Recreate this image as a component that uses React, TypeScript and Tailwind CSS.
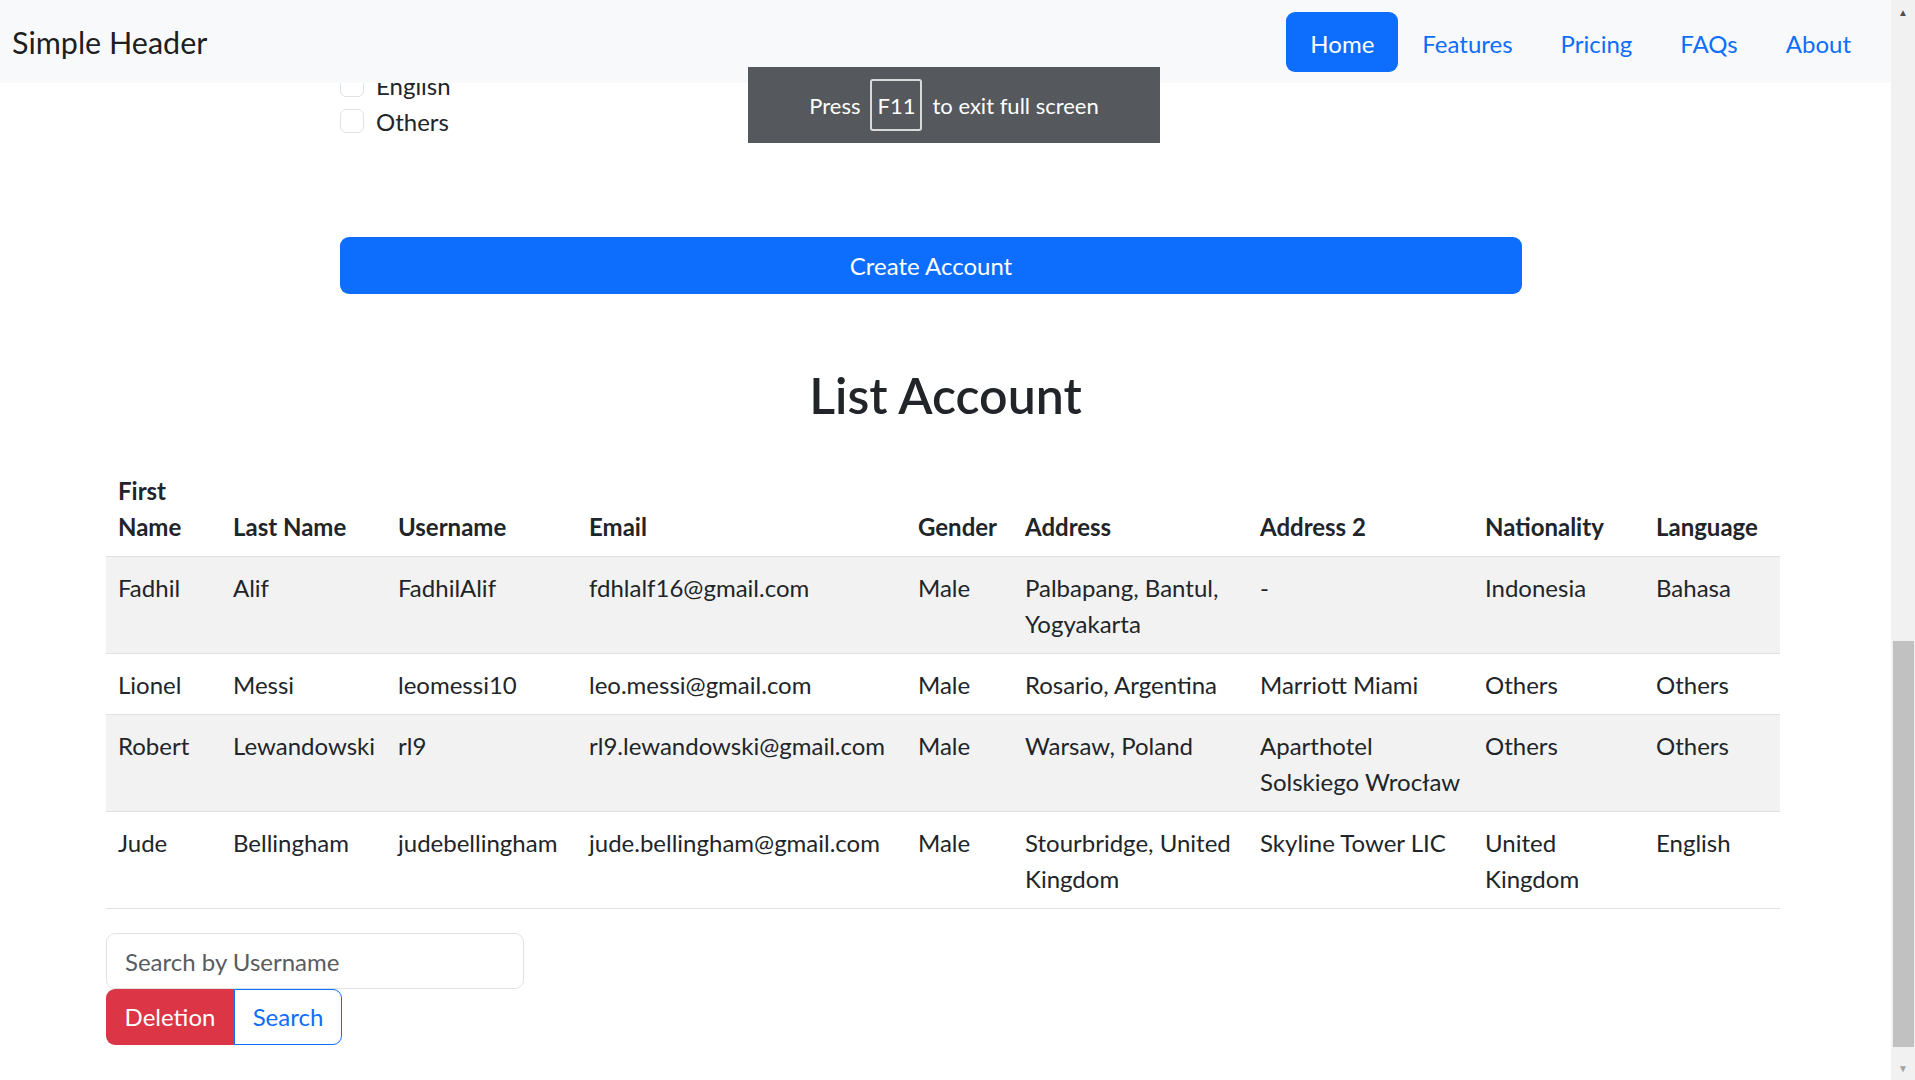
import { useState } from "react";

type Account = {
  firstName: string;
  lastName: string;
  username: string;
  email: string;
  gender: string;
  address: string;
  address2: string;
  nationality: string;
  language: string;
};

const ACCOUNTS: Account[] = [
  {
    firstName: "Fadhil",
    lastName: "Alif",
    username: "FadhilAlif",
    email: "fdhlalf16@gmail.com",
    gender: "Male",
    address: "Palbapang, Bantul,\nYogyakarta",
    address2: "-",
    nationality: "Indonesia",
    language: "Bahasa",
  },
  {
    firstName: "Lionel",
    lastName: "Messi",
    username: "leomessi10",
    email: "leo.messi@gmail.com",
    gender: "Male",
    address: "Rosario, Argentina",
    address2: "Marriott Miami",
    nationality: "Others",
    language: "Others",
  },
  {
    firstName: "Robert",
    lastName: "Lewandowski",
    username: "rl9",
    email: "rl9.lewandowski@gmail.com",
    gender: "Male",
    address: "Warsaw, Poland",
    address2: "Aparthotel\nSolskiego Wrocław",
    nationality: "Others",
    language: "Others",
  },
  {
    firstName: "Jude",
    lastName: "Bellingham",
    username: "judebellingham",
    email: "jude.bellingham@gmail.com",
    gender: "Male",
    address: "Stourbridge, United\nKingdom",
    address2: "Skyline Tower LIC",
    nationality: "United\nKingdom",
    language: "English",
  },
];

const COLUMNS: { label: string; key: keyof Account; width: string }[] = [
  { label: "First\nName", key: "firstName", width: "w-[115px]" },
  { label: "Last Name", key: "lastName", width: "w-[165px]" },
  { label: "Username", key: "username", width: "w-[191px]" },
  { label: "Email", key: "email", width: "w-[329px]" },
  { label: "Gender", key: "gender", width: "w-[107px]" },
  { label: "Address", key: "address", width: "w-[235px]" },
  { label: "Address 2", key: "address2", width: "w-[225px]" },
  { label: "Nationality", key: "nationality", width: "w-[171px]" },
  { label: "Language", key: "language", width: "w-[136px]" },
];

const NAV_LINKS = ["Home", "Features", "Pricing", "FAQs", "About"];

const Checkbox = ({ label }: { label: string }) => (
  <label className="flex h-[36px] items-start">
    <span className="mt-[6px] block size-[24px] rounded-[6px] border border-[#dee2e6] bg-white" />
    <span className="ml-[12px] pt-[1px] text-[24px] leading-[36px]">{label}</span>
  </label>
);

const App = () => {
  const [search, setSearch] = useState<string>("");

  return (
    <div className="flex h-[1080px] w-[1915px] overflow-hidden bg-white font-['Lato',sans-serif] text-[#212529]">
      <div className="relative flex-1">
        <header className="absolute inset-x-0 top-0 z-10 flex h-[83px] items-center justify-between bg-[#f8f9fa] pl-[12px] pr-[16px]">
          <span className="pt-[2px] text-[30.5px] text-black/90">Simple Header</span>
          <nav className="flex items-center">
            {NAV_LINKS.map((link, i) => (
              <a
                key={link}
                href="#"
                className={
                  i === 0
                    ? "rounded-[9px] bg-[#0d6efd] px-[24px] pb-[10px] pt-[14px] text-[24px] leading-[36px] text-white"
                    : "px-[24px] pb-[10px] pt-[14px] text-[24px] leading-[36px] text-[#0d6efd]"
                }
              >
                {link}
              </a>
            ))}
          </nav>
        </header>

        <div className="absolute left-[748px] top-[67px] z-20 flex h-[76px] w-[412px] items-center justify-center gap-[10px] bg-[#55585c] text-[22px] text-white">
          <span>Press</span>
          <span className="flex size-[52px] items-center justify-center rounded-[3px] border-2 border-[#d9d9d9]">
            F11
          </span>
          <span>to exit full screen</span>
        </div>

        <main className="pt-[67px]">
          <form className="ml-[340px] w-[1182px]" onSubmit={(e) => e.preventDefault()}>
            <Checkbox label="English" />
            <Checkbox label="Others" />
            <button
              type="submit"
              className="mt-[98px] h-[57px] w-full rounded-[9px] bg-[#0d6efd] text-[24px] text-white"
            >
              Create Account
            </button>
          </form>

          <h2 className="mt-[72px] text-center text-[50px] font-semibold leading-[58px]">
            List Account
          </h2>

          <div className="ml-[106px] w-[1674px]">
            <table className="mt-[36px] w-full table-fixed border-collapse text-left text-[24px] leading-[36px]">
              <colgroup>
                {COLUMNS.map((col) => (
                  <col key={col.key} className={col.width} />
                ))}
              </colgroup>
              <thead>
                <tr className="border-b border-[#dee2e6]">
                  {COLUMNS.map((col) => (
                    <th
                      key={col.key}
                      className="whitespace-pre px-[12px] pb-[11px] pt-[13px] align-bottom font-bold"
                    >
                      {col.label}
                    </th>
                  ))}
                </tr>
              </thead>
              <tbody>
                {ACCOUNTS.map((acc, i) => (
                  <tr
                    key={acc.username}
                    className={
                      i % 2 === 0
                        ? "border-b border-[#dee2e6] bg-[#f2f2f2]"
                        : "border-b border-[#dee2e6] bg-white"
                    }
                  >
                    {COLUMNS.map((col) => (
                      <td
                        key={col.key}
                        className="whitespace-pre px-[12px] pb-[11px] pt-[13px] align-top"
                      >
                        {acc[col.key]}
                      </td>
                    ))}
                  </tr>
                ))}
              </tbody>
            </table>

            <input
              type="text"
              value={search}
              onChange={(e) => setSearch(e.target.value)}
              placeholder="Search by Username"
              className="mt-[24px] block h-[56px] w-[418px] rounded-[9px] border border-[#dee2e6] px-[18px] text-[24px] placeholder:text-[#595c5f] focus:outline-none"
            />
            <div className="flex">
              <button className="h-[56px] w-[128px] rounded-l-[9px] bg-[#dc3545] text-[24px] text-white">
                Deletion
              </button>
              <button className="h-[56px] w-[108px] rounded-r-[9px] border border-[#0d6efd] text-[24px] text-[#0d6efd]">
                Search
              </button>
            </div>
          </div>
        </main>
      </div>

      <div className="flex w-[24px] flex-col items-center bg-[#f1f1f1]">
        <span className="mt-[6px] text-[10px] leading-[12px] text-[#505050]">▲</span>
        <div className="flex-1" />
        <div className="mb-[15px] h-[406px] w-[21px] bg-[#c1c1c1]" />
        <span className="mb-[6px] text-[10px] leading-[12px] text-[#a3a3a3]">▼</span>
      </div>
    </div>
  );
};

export default App;
